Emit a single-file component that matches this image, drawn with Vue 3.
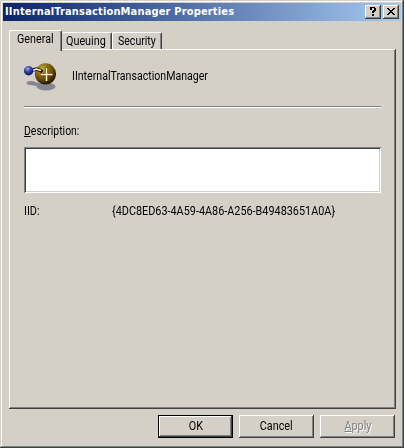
<script setup>
const tabs = [
  { label: 'General', cls: 'active' },
  { label: 'Queuing', cls: 'queuing' },
  { label: 'Security', cls: 'security' },
]
</script>

<template>
  <div class="window">
    <header class="titlebar">
      <span class="title">IInternalTransactionManager Properties</span>
      <button class="cap" aria-label="Help">
        <svg width="14" height="12" viewBox="0 0 14 12" shape-rendering="crispEdges">
          <path d="M4 1h5v1h1v3h-1v1h-1v1h-2v-2h1v-1h1v-2h-2v2h-2v-2h-0zM6 8h2v2h-2z" fill="#000" />
        </svg>
      </button>
      <button class="cap close" aria-label="Close">
        <svg width="14" height="12" viewBox="0 0 14 12" shape-rendering="crispEdges">
          <path d="M3 2h2v1h1v1h2v-1h1v-1h2v1h-1v1h-1v1h-1v1h1v1h1v1h1v1h-2v-1h-1v-1h-2v1h-1v1h-2v-1h1v-1h1v-1h1v-1h-1v-1h-1v-1h-1z" fill="#000" />
        </svg>
      </button>
    </header>
    <nav class="tabs">
      <div v-for="t in tabs" :key="t.label" class="tab" :class="t.cls"><span class="narrow">{{ t.label }}</span></div>
    </nav>
    <main class="panel">
      <section class="identity">
        <svg width="34" height="30" viewBox="0 0 34 30">
          <defs>
            <radialGradient id="gold" cx=".36" cy=".28" r=".72">
              <stop offset="0" stop-color="#c4ae48" />
              <stop offset=".4" stop-color="#8a7012" />
              <stop offset=".75" stop-color="#524004" />
              <stop offset="1" stop-color="#211900" />
            </radialGradient>
            <radialGradient id="blue" cx=".4" cy=".3" r=".7">
              <stop offset="0" stop-color="#a4b0f0" />
              <stop offset=".4" stop-color="#3e4db4" />
              <stop offset="1" stop-color="#0c1058" />
            </radialGradient>
            <filter id="soft"><feGaussianBlur stdDeviation=".6" /></filter>
          </defs>
          <g fill="#85858f" filter="url(#soft)">
            <ellipse cx="22" cy="23.5" rx="9.5" ry="4" />
            <ellipse cx="7" cy="20" rx="4.5" ry="2" />
            <path d="M7 18.5l12 2v4L7 22z" />
          </g>
          <circle cx="21.5" cy="10.9" r="10.6" fill="url(#gold)" />
          <path d="M8.5 7l4-1 4 1.500 2 1.500" fill="none" stroke="#241d04" stroke-width="3.4" />
          <path d="M8.500 7.500l4-1.500 4.500 1.500" fill="none" stroke="#f4efd2" stroke-width="1.5" />
          <circle cx="4.6" cy="7.7" r="4.7" fill="url(#blue)" />
          <path d="M22.500 4.500v13.500M16 11.500h12.500" stroke="#7c2c0b" stroke-width="3.2" />
          <path d="M22.500 5v13M16.500 11.500h12" stroke="#fff4ce" stroke-width="1.5" />
        </svg>
        <span class="name narrow">IInternalTransactionManager</span>
      </section>
      <div class="rule"></div>
      <label class="desc" for="description"><span class="narrow"><u>D</u>escription:</span></label>
      <textarea id="description" class="field"></textarea>
      <div class="iid"><span class="key"><span class="narrow">IID:</span></span><span class="guid narrow">{4DC8ED63-4A59-4A86-A256-B49483651A0A}</span></div>
    </main>
    <footer class="actions">
      <button class="btn ok"><span class="narrow">OK</span></button>
      <button class="btn cancel"><span class="narrow">Cancel</span></button>
      <button class="btn apply" disabled><span class="narrow"><u>A</u>pply</span></button>
    </footer>
  </div>
</template>

<style>
body { margin: 0; background: #d4d0c8; }
</style>

<style scoped>
* { box-sizing: border-box; }
.window {
  width: 404px; height: 448px; padding: 3px;
  background: #d4d0c8; color: #000;
  font: 12px/14px Roboto, "Liberation Sans", sans-serif;
  box-shadow: inset -1px -1px #404040, inset 1px 1px #d4d0c8, inset -2px -2px #808080, inset 2px 2px #fff;
  display: flex; flex-direction: column;
}
.narrow { display: inline-block; transform: scaleX(.9); transform-origin: 0 50%; white-space: nowrap; }
.titlebar {
  height: 18px; display: flex; align-items: center; padding: 0 2px;
  background: linear-gradient(90deg, #0a246a, #a6caf0);
}
.title {
  flex: 1; color: #fff; white-space: nowrap; letter-spacing: .16px;
  font: bold 11px/14px "DejaVu Sans Condensed", "DejaVu Sans", sans-serif;
}
button { font: inherit; color: inherit; margin: 0; padding: 0; border: 0; border-radius: 0; }
.cap {
  width: 16px; height: 14px; background: #d4d0c8; display: flex; padding: 1px;
  box-shadow: inset -1px -1px #404040, inset 1px 1px #fff, inset -2px -2px #808080;
}
.cap.close { margin-left: 2px; }
.cap svg { display: block; flex: none; }
.tabs { display: flex; align-items: flex-end; height: 29px; margin-left: 6px; flex: none; }
.tab {
  height: 18px; display: flex; padding: 1px 0 0 5px; white-space: nowrap;
  border-left: 1px solid #fff; border-top: 1px solid #fff; border-right: 1px solid #404040;
  border-radius: 2px 2px 0 0; box-shadow: inset -1px 0 #808080;
}
.tab.active {
  width: 53px; height: 21px; margin-bottom: -1px; padding: 1px 0 0 7px;
  background: #d4d0c8; position: relative; z-index: 1;
}
.tab.queuing { width: 50px; padding-left: 4px; border-left: 0; }
.tab.security { width: 50px; }
.tab.security .narrow { transform: scaleX(.88); }
.panel {
  width: 387px; height: 360px; margin: -1px 0 0 6px; padding: 14px 15px 0 15px; flex: none;
  box-shadow: inset -1px -1px #404040, inset 1px 1px #fff, inset -2px -2px #808080;
}
.identity { display: flex; height: 43px; }
.name { margin: 6px 0 0 14px; transform: scaleX(.883); }
.rule { width: 357px; height: 2px; background: #808080; border-bottom: 1px solid #fff; }
.desc { display: block; margin-top: 16px; height: 14px; }
.desc .narrow { transform: scaleX(.87); }
u { text-decoration: underline; text-underline-offset: 1px; text-decoration-thickness: 1px; text-decoration-skip-ink: none; }
.field {
  display: block; width: 357px; height: 46px; margin: 9px 0 0; padding: 3px; resize: none; outline: 0;
  border: 0; border-radius: 0; background: #fff;
  box-shadow: inset 1px 1px #808080, inset -1px -1px #fff, inset 2px 2px #404040, inset -2px -2px #d4d0c8;
}
.iid { display: flex; margin-top: 11px; }
.key { width: 88px; }
.guid { transform: scaleX(.904); }
.actions { display: flex; gap: 6px; margin: 6px 0 0 155px; }
.btn {
  width: 75px; height: 23px; background: #d4d0c8; text-align: center; line-height: 21px;
  box-shadow: inset -1px -1px #404040, inset 1px 1px #fff, inset -2px -2px #808080;
}
.btn .narrow { transform-origin: 50% 50%; }
.ok { border: 1px solid #000; line-height: 19px; }
.apply { color: #808080; text-shadow: 1px 1px #fff; }
</style>
